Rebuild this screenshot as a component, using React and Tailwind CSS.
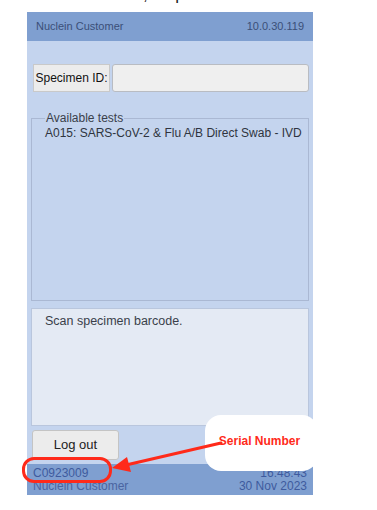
export default function App() {
  return (
    <div
      className="relative w-[377px] h-[510px] overflow-hidden bg-white"
      style={{ fontFamily: '"Liberation Sans", Arial, sans-serif' }}
    >
      {/* clipped caption line above the screenshot */}
      <div className="h-[12px] overflow-hidden">
        <p className="-mt-[15px] pl-[92px] whitespace-nowrap text-[17px] leading-[20px] text-[#222]">
          screen, a specimen barcode of the test things.
        </p>
      </div>

      {/* device screen */}
      <div className="ml-[27px] w-[286px] flex flex-col">
        <div className="h-[29px] bg-[#7f9fd0] flex items-center justify-between px-[9px] text-[11px] text-[#3b4f78]">
          <span>Nuclein Customer</span>
          <span>10.0.30.119</span>
        </div>

        <div className="bg-[#c4d4ee] px-[4px] pt-[23px]">
          <div className="flex h-[28px] gap-[2px] pl-[2px]">
            <div className="w-[77px] bg-[#ececec] border border-[#c9c9c9] flex items-center justify-center text-[12px] text-[#111]">
              Specimen ID:
            </div>
            <div className="w-[197px] bg-[#efefef] border border-[#b9bcc2] rounded-[3px]" />
          </div>

          <fieldset className="mt-[19px] h-[190px] w-full min-w-0 border border-[#aab8d3] px-[13px]">
            <legend className="px-[1px] text-[12px] leading-[14px] text-[#3a3f4a]">Available tests</legend>
            <p className="whitespace-nowrap text-[12px] leading-[16px] text-[#2f3440]">
              A015: SARS-CoV-2 &amp; Flu A/B Direct Swab - IVD
            </p>
          </fieldset>

          <div className="mt-[7px] h-[118px] bg-[#e4eaf4] border border-[#b9c6dd] px-[13px] pt-[3px] text-[12.5px] text-[#3a3f4a]">
            Scan specimen barcode.
          </div>

          <div className="pt-[4px] pb-[4px]">
            <button className="w-[87px] h-[30px] ml-[1px] bg-[#ececec] border border-[#c4c4c4] rounded-[3px] text-[13px] text-[#222]">
              Log out
            </button>
          </div>
        </div>

        <div className="h-[31px] bg-[#7f9fd0] flex justify-between px-[6px] pt-[3px] text-[12px] leading-[13px] text-[#3e5b9e]">
          <div className="flex flex-col">
            <span>C0923009</span>
            <span className="text-[#4a64a0]">Nuclein Customer</span>
          </div>
          <div className="flex flex-col items-end">
            <span>16:48:43</span>
            <span>30 Nov 2023</span>
          </div>
        </div>
      </div>

      {/* annotation: callout */}
      <div className="absolute left-[205px] top-[415px] w-[113px] h-[56px] bg-white rounded-[16px] flex items-center justify-center pr-[4px] pb-[4px]">
        <span className="text-[12px] font-bold text-[#ff2a1a]">Serial Number</span>
      </div>

      {/* annotation: ring and arrow */}
      <div className="absolute left-[22px] top-[457px] w-[90px] h-[26px] border-[3px] border-[#ff2a1a] rounded-[12px]" />
      <svg className="absolute left-0 top-0" width="377" height="510" viewBox="0 0 377 510">
        <line x1="221" y1="443" x2="126" y2="465" stroke="#ff2a1a" strokeWidth="3" strokeLinecap="round" />
        <polygon points="112,468 127,457 131,472" fill="#ff2a1a" />
      </svg>
    </div>
  )
}
